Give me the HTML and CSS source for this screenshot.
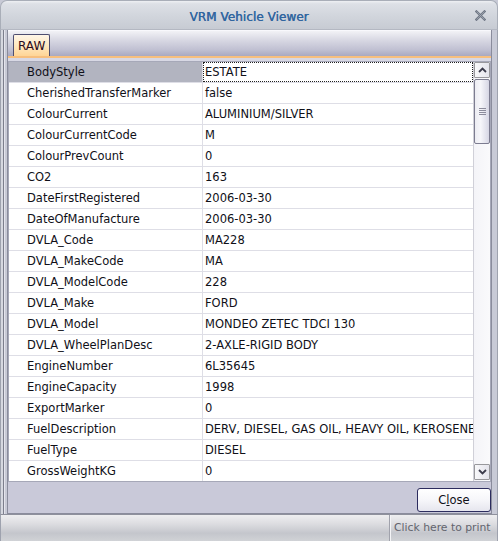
FILE: index.html
```html
<!DOCTYPE html>
<html>
<head>
<meta charset="utf-8">
<link rel="stylesheet" href="styles.css">
</head>
<body>
<div class="window">
  <div class="titlebar">
    <span></span>
    <span class="title">VRM Vehicle Viewer</span>
    <span class="tb-right">
      <svg class="xicon" width="11" height="11" viewBox="0 0 11 11">
        <path d="M1.5 1.5 L9.5 9.5 M9.5 1.5 L1.5 9.5" stroke="#6e7684" stroke-width="2.4" stroke-linecap="square"/>
        <path d="M1.5 1.5 L9.5 9.5 M9.5 1.5 L1.5 9.5" stroke="#a2a8b4" stroke-width="0.8"/>
      </svg>
    </span>
  </div>
  <div class="frame">
    <div class="client">
      <div class="tabstrip">
        <div class="tab">RAW</div>
      </div>
      <div class="tabline"></div>
      <div class="tabgap"></div>
      <div class="grid">
        <div class="rows">
          <div class="row sel"><div class="k">BodyStyle</div><div class="v"><span class="focus">ESTATE</span></div></div>
          <div class="row"><div class="k">CherishedTransferMarker</div><div class="v">false</div></div>
          <div class="row"><div class="k">ColourCurrent</div><div class="v">ALUMINIUM/SILVER</div></div>
          <div class="row"><div class="k">ColourCurrentCode</div><div class="v">M</div></div>
          <div class="row"><div class="k">ColourPrevCount</div><div class="v">0</div></div>
          <div class="row"><div class="k">CO2</div><div class="v">163</div></div>
          <div class="row"><div class="k">DateFirstRegistered</div><div class="v">2006-03-30</div></div>
          <div class="row"><div class="k">DateOfManufacture</div><div class="v">2006-03-30</div></div>
          <div class="row"><div class="k">DVLA_Code</div><div class="v">MA228</div></div>
          <div class="row"><div class="k">DVLA_MakeCode</div><div class="v">MA</div></div>
          <div class="row"><div class="k">DVLA_ModelCode</div><div class="v">228</div></div>
          <div class="row"><div class="k">DVLA_Make</div><div class="v">FORD</div></div>
          <div class="row"><div class="k">DVLA_Model</div><div class="v">MONDEO ZETEC TDCI 130</div></div>
          <div class="row"><div class="k">DVLA_WheelPlanDesc</div><div class="v">2-AXLE-RIGID BODY</div></div>
          <div class="row"><div class="k">EngineNumber</div><div class="v">6L35645</div></div>
          <div class="row"><div class="k">EngineCapacity</div><div class="v">1998</div></div>
          <div class="row"><div class="k">ExportMarker</div><div class="v">0</div></div>
          <div class="row"><div class="k">FuelDescription</div><div class="v">DERV, DIESEL, GAS OIL, HEAVY OIL, KEROSENE</div></div>
          <div class="row"><div class="k">FuelType</div><div class="v">DIESEL</div></div>
          <div class="row last"><div class="k">GrossWeightKG</div><div class="v">0</div></div>
        </div>
        <div class="vscroll">
          <div class="sbtn">
            <svg width="9" height="6" viewBox="0 0 9 6"><path d="M1 5 L4.5 1.5 L8 5" fill="none" stroke="#3c3c4c" stroke-width="1.8"/></svg>
          </div>
          <div class="thumb">
            <div class="grip"></div>
          </div>
          <div class="track"></div>
          <div class="sbtn">
            <svg width="9" height="6" viewBox="0 0 9 6"><path d="M1 1 L4.5 4.5 L8 1" fill="none" stroke="#3c3c4c" stroke-width="1.8"/></svg>
          </div>
        </div>
      </div>
      <div class="buttonbar">
        <button class="btn">C<u>l</u>ose</button>
      </div>
    </div>
  </div>
  <div class="statusbar">
    <div class="status-left"></div>
    <div class="status-sep"></div>
    <div class="status-right">Click here to print</div>
  </div>
</div>
</body>
</html>
```
FILE: styles.css
```css
html, body {
  margin: 0;
  padding: 0;
}
body {
  width: 498px;
  height: 541px;
  overflow: hidden;
  font-family: "DejaVu Sans", "Verdana", sans-serif;
  font-size: 11.5px;
  color: #101018;
  background: #c8cad6;
}
.window {
  width: 498px;
  height: 541px;
  display: flex;
  flex-direction: column;
  background: #c8cad6;
}
.titlebar {
  flex: none;
  height: 30px;
  box-sizing: border-box;
  display: grid;
  grid-template-columns: 1fr auto 1fr;
  align-items: center;
  background: linear-gradient(#eef0f3 0%, #dde0e6 10%, #d2d6dd 50%, #c7cbd3 100%);
  border: 1px solid #a9aeb8;
  border-bottom: 1px solid #b4b8c2;
  border-radius: 7px 7px 0 0;
}
.title {
  font-size: 12px;
  color: #30659f;
  padding-top: 3px;
  letter-spacing: 0.05px;
  text-shadow: 0.35px 0 0 #30659f;
}
.tb-right {
  display: flex;
  justify-content: flex-end;
  padding-right: 11px;
  padding-top: 1px;
}
.frame {
  flex: 1;
  display: flex;
  flex-direction: column;
  padding: 0 5px 0 6px;
  border-left: 1px solid #9ea2ae;
  border-right: 1px solid #9ea2ae;
  background: linear-gradient(90deg, #d6d8e0 0, #d6d8e0 2px, #7c7e8c 2px, #7c7e8c 3px, #e4e4ec 3px, #e4e4ec 4px, #c8cad6 4px);
  min-height: 0;
}
.client {
  flex: 1;
  display: flex;
  flex-direction: column;
  border: 1px solid #8a8c9c;
  border-top: none;
  background: #c9c9d9;
  min-height: 0;
}
.tabstrip {
  flex: none;
  height: 26px;
  box-sizing: border-box;
  padding: 4px 0 0 5px;
  background: linear-gradient(#f2f2f6 0%, #dcdce6 30%, #c0c0d2 75%, #a9a9c1 100%);
  border-top: 1px solid #f8f8fc;
  display: flex;
  align-items: flex-end;
}
.tab {
  width: 37px;
  height: 22px;
  box-sizing: border-box;
  border: 1px solid #4e4e70;
  border-bottom: none;
  border-radius: 2px 2px 0 0;
  background: linear-gradient(#fff6e8 0%, #ffe8c0 50%, #ffd596 100%);
  color: #2a0a20;
  font-size: 12px;
  padding: 4px 0 0 4px;
  line-height: 14px;
}
.tabline {
  flex: none;
  height: 2px;
  background: #f7bf7e;
}
.tabgap {
  flex: none;
  height: 3px;
  background: #d8d8e4;
}
.grid {
  flex: none;
  display: flex;
  border: 1px solid #a6a8b8;
  background: #fff;
}
.rows {
  flex: 1;
  min-width: 0;
  display: flex;
  flex-direction: column;
}
.row {
  display: flex;
  height: 21px;
  box-sizing: border-box;
  border-bottom: 1px solid #dedee6;
  line-height: 21px;
}
.row.last {
  border-bottom: none;
  height: 20px;
}
.k {
  width: 194px;
  flex: none;
  box-sizing: border-box;
  padding-left: 18px;
  border-right: 1px solid #dedee6;
  white-space: nowrap;
  overflow: hidden;
}
.v {
  flex: 1;
  min-width: 0;
  padding-left: 2px;
  white-space: nowrap;
  overflow: hidden;
}
.row.sel .k {
  background: #b2b4c0;
}
.row.sel .v {
  padding-left: 0;
}
.focus {
  display: block;
  height: 20px;
  box-sizing: border-box;
  border: 1px dotted #202020;
  padding-left: 1px;
  line-height: 19px;
}
.vscroll {
  flex: none;
  width: 17px;
  display: flex;
  flex-direction: column;
  background: linear-gradient(90deg, #d0d0d8 0, #d0d0d8 1px, #f4f4f8 1px, #fafafc 100%);
}
.sbtn {
  flex: none;
  height: 16px;
  box-sizing: border-box;
  border: 1px solid #98989c;
  border-radius: 1px;
  background: linear-gradient(90deg, #f8f8fa, #e4e4ec);
  display: flex;
  align-items: center;
  justify-content: center;
  margin: 0 0 1px 1px;
}
.sbtn:last-child {
  margin: 1px 0 1px 1px;
}
.thumb {
  flex: none;
  height: 65px;
  box-sizing: border-box;
  border: 1px solid #7c7c90;
  border-radius: 2px;
  margin-left: 1px;
  background: linear-gradient(90deg, #ececf2 0%, #f6f6fa 40%, #d6d6e4 100%);
  display: flex;
  align-items: center;
  justify-content: center;
}
.grip {
  width: 7px;
  height: 7px;
  background: repeating-linear-gradient(#8c8c9c 0, #8c8c9c 1px, transparent 1px, transparent 2px);
}
.track {
  flex: 1;
}
.buttonbar {
  flex: 1;
  display: flex;
  justify-content: flex-end;
  align-items: flex-start;
  padding-top: 6px;
}
.btn {
  width: 74px;
  height: 24px;
  box-sizing: border-box;
  border: 1px solid #2c2c5e;
  border-radius: 3px;
  background: linear-gradient(#ffffff 0%, #f6f6fa 50%, #e6e6ee 100%);
  font-family: "DejaVu Sans", sans-serif;
  font-size: 11.5px;
  color: #101018;
  padding: 0;
  margin-right: 0;
}
.btn u {
  text-decoration-thickness: 1px;
}
.statusbar {
  flex: none;
  height: 26px;
  display: flex;
  border-top: 1px solid #8e909c;
  background: linear-gradient(#eeeef0 0%, #dcdce0 35%, #c4c6cc 70%, #d0d2d6 100%);
  border-left: 1px solid #9ea2ae;
  border-right: 1px solid #9ea2ae;
}
.status-left {
  width: 388px;
  flex: none;
}
.status-sep {
  width: 2px;
  flex: none;
  background: linear-gradient(90deg, #a0a2ac 0, #a0a2ac 1px, #f4f4f6 1px);
}
.status-right {
  flex: 1;
  padding-left: 3px;
  line-height: 25px;
  font-size: 10.8px;
  color: #62646e;
  white-space: nowrap;
  overflow: hidden;
}
```
